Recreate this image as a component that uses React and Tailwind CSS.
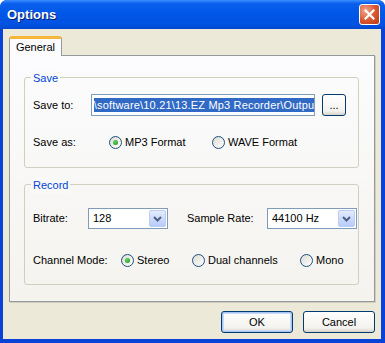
import React from 'react';

function Radio({ checked, label }){
  return (
    <span className="flex items-center gap-[3px]">
      <span className="flex h-[13px] w-[13px] items-center justify-center rounded-full border border-[#1C5180] bg-[linear-gradient(135deg,#DCDAD2,#FFFFFF)]">
        {checked && <span className="h-[5px] w-[5px] rounded-full bg-[radial-gradient(circle_at_40%_35%,#63D563,#189418)]" />}
      </span>
      <span>{label}</span>
    </span>
  );
}

function Combo({ value, className }){
  return (
    <div className={className}>
      <div className="flex h-full items-stretch border border-[#7F9DB9] bg-white p-px">
        <span className="flex-1 pl-[3px] leading-[17px]">{value}</span>
        <span className="flex w-[17px] items-center justify-center rounded-[2px] border border-[#BBCDF4] bg-[linear-gradient(#E3EBFE,#B7CCFA)]">
          <svg width="9" height="6" viewBox="0 0 9 6">
            <path d="M1 1 L4.5 4.5 L8 1" fill="none" stroke="#4D6185" strokeWidth="2" />
          </svg>
        </span>
      </div>
    </div>
  );
}

function XpButton({ children, className }){
  return (
    <button type="button" className={className}>
      {children}
    </button>
  );
}

export default function App(){
  return (
    <div className="flex h-[343px] w-[385px] flex-col overflow-hidden rounded-t-[7px] bg-[#0842D6] font-['Liberation_Sans',Arial,sans-serif] text-[11px] text-black">
      {/* title bar */}
      <div className="flex h-[29px] items-center justify-between bg-[linear-gradient(#3D8EFF_0%,#0A60EC_12%,#0056E6_50%,#0052E2_85%,#0047CC_100%)] pl-[7px] pr-[5px]">
        <span className="text-[13px] font-bold text-white [text-shadow:1px_1px_0_#0A1E6A]">Options</span>
        <span className="flex h-[21px] w-[21px] items-center justify-center rounded-[3px] border border-white bg-[radial-gradient(circle_at_30%_30%,#F1A58A,#D8542E_55%,#B33A16)]">
          <svg width="11" height="11" viewBox="0 0 11 11">
            <path d="M1.5 1.5 L9.5 9.5 M9.5 1.5 L1.5 9.5" stroke="white" strokeWidth="2.2" strokeLinecap="square" />
          </svg>
        </span>
      </div>

      {/* body */}
      <div className="mb-[4px] ml-[3px] mr-[4px] flex flex-1 flex-col bg-[#ECE9D8] px-[6px] pt-[7px]">
        <div className="flex">
          <div className="relative z-10 -mb-px flex h-[20px] w-[53px] items-center justify-center rounded-t-[3px] border-x border-t-[3px] border-x-[#919B9C] border-t-[#F5B63B] bg-[#FCFCFE] pb-[1px]">
            General
          </div>
        </div>
        <div className="flex h-[247px] flex-col border border-[#919B9C] bg-[linear-gradient(#FCFCFE,#F4F3EE)] pl-[14px] pr-[15px] pt-[21px] shadow-[1px_1px_0_#D0CEBF]">
          {/* Save group */}
          <div className="relative rounded-[3px] border border-[#D0D0BF] pb-[14px] pl-[8px] pr-[12px] pt-[16px]">
            <span className="absolute left-[6px] top-[-8px] bg-[#FBFBFC] px-[2px] text-[#0046D5]">Save</span>
            <div className="flex items-center">
              <span className="w-[58px]">Save to:</span>
              <div className="flex h-[22px] w-[225px] items-center overflow-hidden whitespace-nowrap border border-[#7F9DB9] bg-white pl-[2px]">
                <span className="bg-[#316AC5] leading-[14px] tracking-[0.18px] text-white">\software\10.21\13.EZ Mp3 Recorder\Output</span>
              </div>
              <XpButton className="ml-[7px] flex h-[22px] w-[24px] items-end justify-center rounded-[3px] border border-[#003C74] bg-[linear-gradient(#FFFFFF,#F3F2EE_80%,#D8D2C6)] pb-[4px] text-[11px] leading-none">...</XpButton>
            </div>
            <div className="mt-[15px] flex h-[22px] items-center">
              <span className="w-[76px]">Save as:</span>
              <span className="w-[103px]"><Radio checked label="MP3 Format" /></span>
              <Radio label="WAVE Format" />
            </div>
          </div>

          {/* Record group */}
          <div className="relative mt-[16px] rounded-[3px] border border-[#D0D0BF] pb-[13px] pl-[8px] pr-[1px] pt-[23px]">
            <span className="absolute left-[6px] top-[-8px] bg-[#F9F9F8] px-[2px] text-[#0046D5]">Record</span>
            <div className="flex items-center">
              <span className="w-[55px]">Bitrate:</span>
              <Combo value="128" className="h-[21px] w-[80px]" />
              <span className="ml-[19px] w-[80px]">Sample Rate:</span>
              <Combo value="44100 Hz" className="h-[21px] w-[90px]" />
            </div>
            <div className="mt-[20px] flex h-[22px] items-center">
              <span className="w-[88px]">Channel Mode:</span>
              <span className="w-[71px]"><Radio checked label="Stereo" /></span>
              <span className="w-[108px]"><Radio label="Dual channels" /></span>
              <Radio label="Mono" />
            </div>
          </div>
        </div>

        <div className="mt-[9px] flex justify-end gap-[10px]">
          <XpButton className="h-[22px] w-[72px] rounded-[3px] border border-[#003C74] bg-[linear-gradient(#FFFFFF,#F3F2EE_80%,#D8D2C6)] shadow-[inset_0_0_0_1px_#A8C4F0,inset_0_0_0_2px_#C9DAF8]">OK</XpButton>
          <XpButton className="h-[22px] w-[72px] rounded-[3px] border border-[#003C74] bg-[linear-gradient(#FFFFFF,#F3F2EE_80%,#D8D2C6)]">Cancel</XpButton>
        </div>
      </div>
    </div>
  );
}
